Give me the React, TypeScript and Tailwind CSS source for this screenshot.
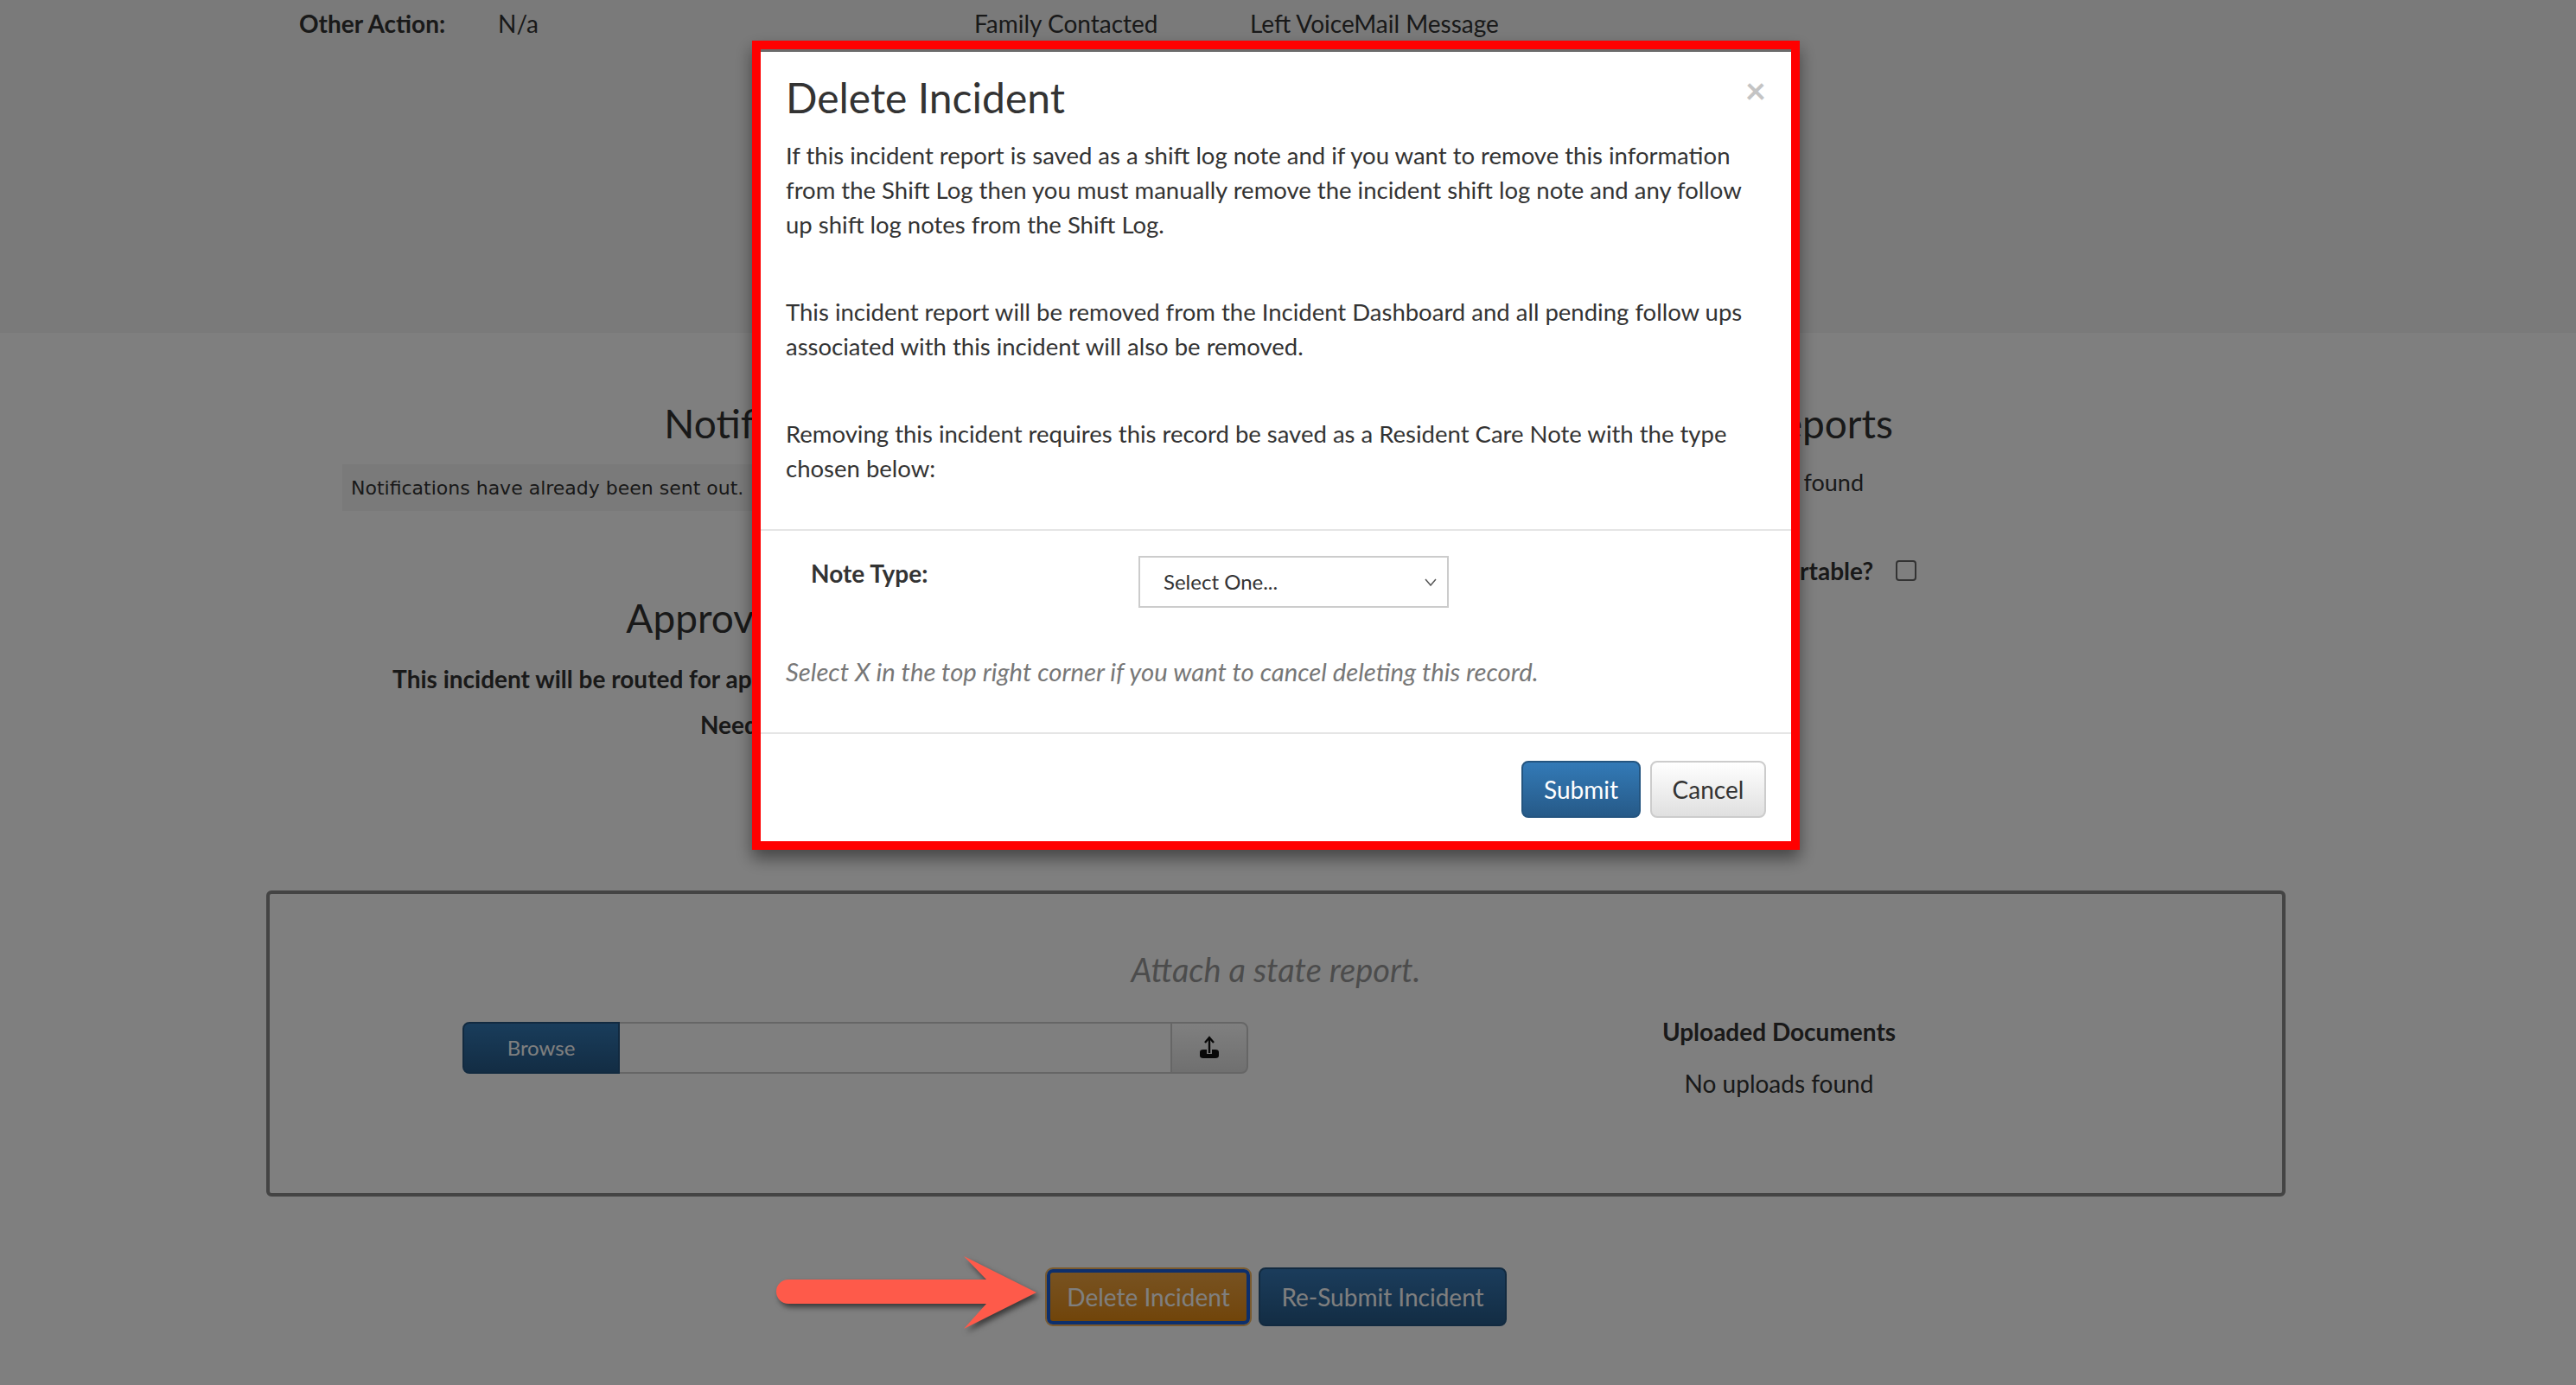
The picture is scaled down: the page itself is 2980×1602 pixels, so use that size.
import React from "react";

function UploadIcon() {
  return (
    <svg width="26" height="28" viewBox="0 0 26 28" fill="none">
      <polyline points="8,8 13,2 18,8" stroke="#111" strokeWidth="2.4" fill="none" />
      <line x1="13" y1="3" x2="13" y2="20" stroke="#111" strokeWidth="2.4" />
      <path d="M2 19 Q2 16 6 16 H10 V21 H16 V16 H20 Q24 16 24 19 V23 Q24 26 20 26 H6 Q2 26 2 23 Z" fill="#111" />
    </svg>
  );
}

function Arrow() {
  return (
    <svg
      width="320"
      height="100"
      viewBox="0 0 320 100"
      className="absolute left-[890px] top-[1445px] z-[60] drop-shadow-[3px_4px_3px_rgba(0,0,0,0.55)]"
    >
      <path
        d="M22 35 L251 35 L225 8 L309 50 L225 92 L251 63 L22 63 A14 14 0 0 1 22 35 Z"
        fill="#fe5a4a"
      />
    </svg>
  );
}

export default function App() {
  return (
    <div className="relative min-h-[1602px] w-full overflow-hidden bg-white font-['Lato',sans-serif] text-[#333]">
      {/* top details band */}
      <div className="h-[385px] bg-[#f5f5f5]">
        <div className="flex w-[2952px] pl-[346px] pt-[7px] text-[28px] leading-[40px]">
          <span className="w-[230px] font-bold">Other Action:</span>
          <span className="w-[551px]">N/a</span>
          <span className="w-[319px]">Family Contacted</span>
          <span>Left VoiceMail Message</span>
        </div>
      </div>

      <div className="w-[2952px]">
        {/* notifications / reports */}
        <div className="mx-auto grid h-[645px] w-[2312px] grid-cols-2 pt-[80px] text-center">
          <div>
            <h2 className="text-[46px] leading-[50px]">Notifications</h2>
            <div className="mx-[76px] mt-[22px] flex h-[54px] items-center bg-[#f5f5f5] pl-[10px] text-left font-['DejaVu_Sans',sans-serif] text-[22px]">
              Notifications have already been sent out.
            </div>
            <h2 className="mt-[99px] text-[46px] leading-[50px]">Approval Process</h2>
            <p className="mt-[25px] text-[28px] font-bold leading-[40px]">
              This incident will be routed for approval to the following staff members:
            </p>
            <p className="mt-[13px] text-[28px] font-bold leading-[40px]">Needed From:</p>
          </div>
          <div>
            <h2 className="text-[46px] leading-[50px]">State Reports</h2>
            <p className="mt-[23px] text-[27px] leading-[40px]">No reports found</p>
            <div className="mt-[62px] flex items-center justify-center gap-[26px]">
              <span className="text-[28px] font-bold leading-[40px]">Is incident reportable?</span>
              <span className="h-[24px] w-[24px] rounded-[4px] border-2 border-[#666] bg-white" />
            </div>
          </div>
        </div>

        {/* attach state report */}
        <div className="mx-[308px] h-[354px] rounded-[6px] border-4 border-[#888]">
          <p className="mt-[66px] text-center text-[38px] italic leading-[42px] text-[#999]">
            Attach a state report.
          </p>
          <div className="mt-[31px] grid grid-cols-2">
            <div className="mt-[9px] flex h-[60px] pl-[223px]">
              <button className="w-[182px] rounded-l-[8px] border-2 border-[#245580] bg-gradient-to-b from-[#337ab7] to-[#265a88] text-[24px] text-white">
                Browse
              </button>
              <div className="w-[637px] border-y-2 border-[#ccc] bg-white" />
              <button className="flex w-[90px] items-center justify-center rounded-r-[8px] border-2 border-[#ccc] bg-gradient-to-b from-white to-[#e0e0e0]">
                <UploadIcon />
              </button>
            </div>
            <div className="text-center text-[28px] leading-[40px]">
              <p className="font-bold">Uploaded Documents</p>
              <p className="mt-[20px]">No uploads found</p>
            </div>
          </div>
        </div>

        {/* bottom actions */}
        <div className="mt-[82px] flex justify-center gap-[8px]">
          <button className="h-[68px] w-[239px] rounded-[9px] border-2 border-[#f4b45c] p-0">
            <span className="flex h-full w-full items-center justify-center rounded-[7px] border-[4px] border-[#1b5ed8] bg-gradient-to-b from-[#f0a540] to-[#e28a12] text-[28px] text-white">
              Delete Incident
            </span>
          </button>
          <button className="h-[68px] w-[287px] rounded-[8px] border-2 border-[#245580] bg-gradient-to-b from-[#377ab8] to-[#265a88] text-[28px] text-white">
            Re-Submit Incident
          </button>
        </div>
      </div>

      {/* backdrop */}
      <div className="fixed inset-0 z-40 bg-black/50" />

      {/* modal with red highlight frame */}
      <div className="fixed left-[870px] top-[47px] z-50 w-[1212px] border-[10px] border-[#ff0000] shadow-[0_10px_18px_rgba(0,0,0,0.45)]">
        <div className="border-t-[3px] border-[#6b6b6b] bg-white">
          <div className="px-[29px] pb-[30px] pt-[27px]">
            <div className="flex items-start justify-between">
              <h3 className="text-[48px] leading-[52px]">Delete Incident</h3>
              <span className="mt-[-4px] text-[42px] font-bold leading-[42px] text-[#c4c4c4]">×</span>
            </div>
            <div className="text-[27.5px] leading-[40px]">
              <p className="mt-[21px] mb-[61px]">
                If this incident report is saved as a shift log note and if you want to remove this information
                from the Shift Log then you must manually remove the incident shift log note and any follow up
                shift log notes from the Shift Log.
              </p>
              <p className="mb-[61px]">
                This incident report will be removed from the Incident Dashboard and all pending follow ups
                associated with this incident will also be removed.
              </p>
              <p className="mb-[20px]">
                Removing this incident requires this record be saved as a Resident Care Note with the type chosen
                below:
              </p>
            </div>
          </div>
          <div className="h-[2px] bg-[#e5e5e5]" />
          <div className="px-[29px] pb-[30px] pt-[29px]">
            <div className="flex">
              <label className="w-[408px] pl-[29px] text-[28px] font-bold leading-[40px]">Note Type:</label>
              <div className="flex h-[60px] w-[359px] items-center justify-between border-2 border-[#ccc] pl-[27px] pr-[12px] text-[24px]">
                <span>Select One...</span>
                <svg width="14" height="9" viewBox="0 0 14 9">
                  <polyline points="1,1 7,8 13,1" fill="none" stroke="#555" strokeWidth="1.5" />
                </svg>
              </div>
            </div>
            <p className="mt-[54px] mb-[20px] text-[29.3px] italic leading-[40px] text-[#777]">
              Select X in the top right corner if you want to cancel deleting this record.
            </p>
          </div>
          <div className="h-[2px] bg-[#e5e5e5]" />
          <div className="flex justify-end gap-[11px] px-[29px] pb-[27px] pt-[31px]">
            <button className="h-[66px] w-[138px] rounded-[8px] border-2 border-[#245580] bg-gradient-to-b from-[#337ab7] to-[#265a88] text-[28px] text-white">
              Submit
            </button>
            <button className="h-[66px] w-[134px] rounded-[8px] border-2 border-[#ccc] bg-gradient-to-b from-white to-[#e0e0e0] text-[28px] text-[#333]">
              Cancel
            </button>
          </div>
        </div>
      </div>

      <Arrow />
    </div>
  );
}
